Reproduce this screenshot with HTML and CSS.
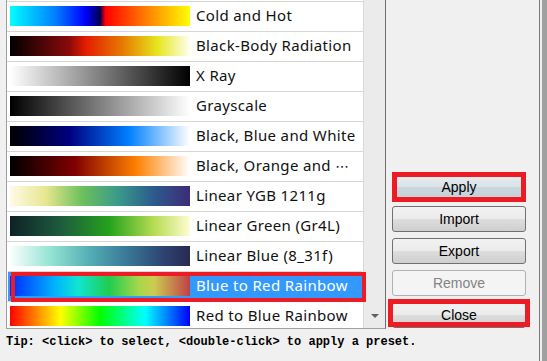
FILE: index.html
```html
<!DOCTYPE html>
<html lang="en">
<head>
    <meta charset="UTF-8">
    <meta name="viewport" content="width=device-width, initial-scale=1.0">
    <title>Choose Preset</title>
    <link rel="stylesheet" href="styles.css">
</head>
<body>
    <div class="window">
        <div class="main">
            <div class="top">
                <div class="list">
                    <div class="rows">
                        <div class="row"><span class="bar cold-hot"></span><span class="name">Cold and Hot</span></div>
                        <div class="row"><span class="bar black-body"></span><span class="name">Black-Body Radiation</span></div>
                        <div class="row"><span class="bar x-ray"></span><span class="name">X Ray</span></div>
                        <div class="row"><span class="bar grayscale"></span><span class="name">Grayscale</span></div>
                        <div class="row"><span class="bar black-blue"></span><span class="name">Black, Blue and White</span></div>
                        <div class="row"><span class="bar black-orange"></span><span class="name">Black, Orange and <span class="dots">⋯</span></span></div>
                        <div class="row"><span class="bar ygb"></span><span class="name">Linear YGB 1211g</span></div>
                        <div class="row"><span class="bar green"></span><span class="name">Linear Green (Gr4L)</span></div>
                        <div class="row"><span class="bar blue"></span><span class="name">Linear Blue (8_31f)</span></div>
                        <div class="row selected"><span class="bar blue-red"></span><span class="name">Blue to Red Rainbow</span></div>
                        <div class="row"><span class="bar red-blue"></span><span class="name">Red to Blue Rainbow</span></div>
                    </div>
                    <div class="scrollbar"><span class="arrow-down"></span></div>
                </div>
                <div class="actions">
                    <button class="apply">Apply</button>
                    <button>Import</button>
                    <button>Export</button>
                    <button disabled>Remove</button>
                    <button>Close</button>
                </div>
            </div>
            <p class="tip">Tip: &lt;click&gt; to select, &lt;double-click&gt; to apply a preset.</p>
        </div>
        <div class="edge"></div>

        <div class="mark mark-row"></div>
        <div class="mark mark-apply"></div>
        <div class="mark mark-close"></div>
    </div>
</body>
</html>
```

FILE: styles.css
```css
body {
    margin: 0;
    background-color: #f0f0f0;
    font-family: "Liberation Sans", Arial, sans-serif;
    color: #000;
}

.window {
    position: relative;
    display: flex;
    height: 361px;
    overflow: hidden;
}

.main {
    width: 540px;
    border-right: 1px solid #7a7a7a;
    box-sizing: border-box;
}

.top {
    display: flex;
    height: 329px;
    padding-left: 6px;
}

.list {
    display: flex;
    width: 380px;
    box-sizing: border-box;
    border-left: 1px solid #a0a0a0;
    border-right: 1px solid #6e6e6e;
    border-bottom: 1px solid #a0a0a0;
    background: #fff;
}

.rows {
    width: 356px;
    padding-top: 1px;
    overflow: hidden;
}

.row {
    display: flex;
    align-items: flex-start;
    height: 30px;
    padding-top: 4px;
    box-sizing: border-box;
    border-top: 1px solid #d6d6d6;
}

.row .bar {
    flex: none;
    width: 180px;
    height: 20px;
    margin-left: 3px;
}

.row .name {
    margin-left: 6px;
    font-family: "Noto Sans", "Liberation Sans", sans-serif;
    font-size: 15px;
    line-height: 19px;
    letter-spacing: 0.35px;
    white-space: nowrap;
    color: #111;
}

.row.selected {
    margin: 0 1px;
    background: #3399ff;
}

.row.selected .bar {
    margin-left: 2px;
}

.row.selected .name {
    color: #fff;
}

.dots {
    font-family: "DejaVu Sans", sans-serif;
    font-size: 14px;
}

.scrollbar {
    display: flex;
    flex-direction: column;
    justify-content: flex-end;
    align-items: center;
    width: 21px;
    border-left: 1px solid #d9d9d9;
    background: #ebebeb;
}

.arrow-down {
    width: 0;
    height: 0;
    margin-bottom: 10px;
    border-left: 4px solid transparent;
    border-right: 4px solid transparent;
    border-top: 4px solid #606060;
}

/* colour maps */
.cold-hot {
    background: linear-gradient(to right, #00ffff 0%, #0080ff 25%, #0000ff 42%, #000050 50%, #ff0000 53%, #ff8000 76%, #ffff00 100%);
}

.black-body {
    background: linear-gradient(to right, #000000 0%, #8b0a0a 33%, #e41c00 42%, #e67800 62%, #e6e61e 82%, #fffff0 100%);
}

.x-ray {
    background: linear-gradient(to right, #ffffff 0%, #000000 100%);
}

.grayscale {
    background: linear-gradient(to right, #000000 0%, #ffffff 100%);
}

.black-blue {
    background: linear-gradient(to right, #000000 0%, #000080 33%, #0080ff 66%, #ffffff 100%);
}

.black-orange {
    background: linear-gradient(to right, #000000 0%, #800000 36%, #ff8000 70%, #ffffff 100%);
}

.ygb {
    background: linear-gradient(to right, #fffae6 0%, #e6e68e 20%, #6cc05c 40%, #3a9a8a 60%, #2c5a8c 80%, #3e2c78 100%);
}

.green {
    background: linear-gradient(to right, #0e2226 0%, #1e5a3e 28%, #24a21c 55%, #b6dc52 80%, #fffcd2 100%);
}

.blue {
    background: linear-gradient(to right, #fafffc 0%, #96e4d4 22%, #52acb4 45%, #3a7896 65%, #2e4470 85%, #272a52 100%);
}

.blue-red {
    background: linear-gradient(to right, #0028ff 0%, #00b4ff 25%, #10e6d0 38%, #20cc50 55%, #a8d84a 72%, #cccc50 80%, #c04048 100%);
}

.red-blue {
    background: linear-gradient(to right, #ff0000 0%, #ffff00 28%, #00ff00 50%, #00ffff 75%, #0000ff 100%);
}

.actions {
    display: flex;
    flex-direction: column;
    justify-content: flex-end;
    gap: 6px;
    width: 154px;
    padding: 0 0 1px 6px;
    box-sizing: border-box;
}

button {
    width: 134px;
    height: 26px;
    padding: 0;
    border: 1px solid #707070;
    border-radius: 3px;
    background: linear-gradient(to bottom, #f2f2f2 0%, #ebebeb 50%, #dddddd 51%, #cfcfcf 100%);
    font-family: "Liberation Sans", Arial, sans-serif;
    font-size: 14px;
    color: #000;
}

button.apply {
    border-color: #3c7fb1;
    background: linear-gradient(to bottom, #e6ecef 0%, #dbe3e8 50%, #cbd7de 51%, #c3d0d8 100%);
}

button:disabled {
    border-color: #adb2b5;
    background: #f4f4f4;
    color: #838383;
}

.tip {
    margin: 0;
    padding: 5px 0 0 6px;
    font-family: "Liberation Mono", "Courier New", monospace;
    font-size: 12px;
    font-weight: bold;
    line-height: 16px;
    white-space: nowrap;
}

.edge {
    flex: 1;
    margin-left: 2px;
    background: #a0a0a0;
}

/* red annotation boxes */
.mark {
    position: absolute;
    box-sizing: border-box;
    border: 5px solid #ed1c24;
}

.mark-row {
    left: 11px;
    top: 272px;
    width: 355px;
    height: 30px;
    border-width: 4px;
}

.mark-apply {
    left: 392px;
    top: 172px;
    width: 134px;
    height: 30px;
}

.mark-close {
    left: 388px;
    top: 299px;
    width: 142px;
    height: 28px;
}
```
